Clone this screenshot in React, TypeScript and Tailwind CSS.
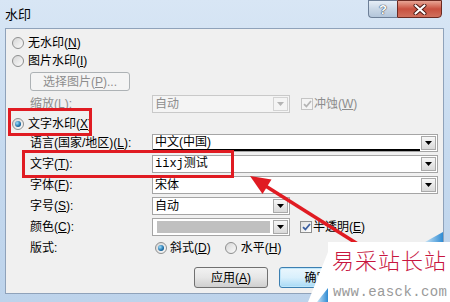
import type { ReactNode } from "react"
import clsx from "clsx"

function Key({ k }: { k: string }) {
  return (
    <>
      (<span className="underline underline-offset-1">{k}</span>)
    </>
  )
}

function Radio({ checked }: { checked?: boolean }) {
  return (
    <span className="flex h-[12px] w-[12px] shrink-0 items-center justify-center rounded-full border border-[#8e8f8f] bg-gradient-to-br from-[#d6d6d6] to-[#fbfbfb]">
      {checked && (
        <span className="h-[6px] w-[6px] rounded-full bg-[radial-gradient(circle_at_35%_35%,#9fe0ff,#1d6fa8_60%,#0d3f6a)]" />
      )}
    </span>
  )
}

function Check({ checked, disabled }: { checked?: boolean; disabled?: boolean }) {
  return (
    <span
      className={clsx(
        "flex h-[12px] w-[12px] shrink-0 items-center justify-center border",
        disabled ? "border-[#c4c4c4] bg-[#f4f4f4]" : "border-[#8e8f8f] bg-gradient-to-br from-[#e0e0e0] to-white"
      )}
    >
      {checked && (
        <svg width="9" height="8" viewBox="0 0 9 8">
          <path
            d="M1 4.2 3.4 6.5 8 1"
            fill="none"
            stroke={disabled ? "#b5b5b5" : "#3c5fa0"}
            strokeWidth="1.8"
          />
        </svg>
      )}
    </span>
  )
}

function Arrow({ disabled }: { disabled?: boolean }) {
  return (
    <span
      className={clsx(
        "m-px flex w-[15px] items-center justify-center border",
        disabled ? "border-[#d3d3d3] bg-[#f4f4f4]" : "border-[#a9a9a9] bg-gradient-to-b from-[#f7f7f7] to-[#d9d9d9]"
      )}
    >
      <svg width="7" height="4" viewBox="0 0 7 4">
        <path d="M0 0h7L3.5 4z" fill={disabled ? "#b4b4b4" : "#000"} />
      </svg>
    </span>
  )
}

function Combo({
  wide,
  disabled,
  underline,
  children,
}: {
  wide?: boolean
  disabled?: boolean
  underline?: boolean
  children?: ReactNode
}) {
  return (
    <div
      className={clsx(
        "flex h-[18px] border",
        wide ? "w-[286px]" : "w-[138px]",
        disabled ? "border-[#c9c9c9] bg-[#f4f4f4] text-[#8d8d8d]" : "border-[#a5a5a5] bg-white"
      )}
    >
      <div className={clsx("flex flex-1 items-center px-[2px]", underline && "border-b-2 border-black")}>
        {children}
      </div>
      <Arrow disabled={disabled} />
    </div>
  )
}

function Field({ label, children }: { label: ReactNode; children: ReactNode }) {
  return (
    <div className="flex h-[18px] items-center pl-[18px]">
      <div className="w-[122px] leading-none">{label}</div>
      {children}
    </div>
  )
}

export default function App() {
  return (
    <div className="relative h-[302px] w-[450px] overflow-hidden bg-gradient-to-b from-[#d8e6f5] via-[#c6daef] to-[#bdd3eb] font-['Liberation_Sans','Noto_Sans_CJK_SC',sans-serif] text-[12px] text-black">
      {/* title bar */}
      <div className="flex h-[28px] items-start">
        <div className="ml-[5px] self-center text-[13px] leading-none">水印</div>
        <div className="ml-auto mr-[8px] flex h-[18px]">
          <div className="flex w-[29px] items-center justify-center rounded-bl-[4px] border border-r-0 border-[#6d7f97] bg-gradient-to-b from-[#e6eef7] via-[#c9d7e6] to-[#b3c5da]">
            <span className="text-[13px] font-bold leading-none text-white [text-shadow:0_0_1px_#1d2b40,0_0_1px_#1d2b40]">?</span>
          </div>
          <div className="flex w-[45px] items-center justify-center rounded-br-[4px] border border-[#6b2a22] bg-gradient-to-b from-[#e8a595] via-[#c8503f] to-[#d0705d]">
            <svg width="14" height="11" viewBox="0 0 14 11">
              <path d="M2.5 1.5 11.5 9.5M11.5 1.5 2.5 9.5" stroke="#4a1610" strokeWidth="4" strokeLinecap="round" />
              <path d="M2.5 1.5 11.5 9.5M11.5 1.5 2.5 9.5" stroke="#fff" strokeWidth="2.2" strokeLinecap="round" />
            </svg>
          </div>
        </div>
      </div>

      {/* client area */}
      <div className="ml-[5px] flex h-[266px] w-[439px] flex-col border border-[#8fa2ba] bg-[#f0f0f0] pl-[6px] pt-[5px]">
        <div className="flex h-[18px] items-center gap-[4px] leading-none">
          <Radio />
          <span>
            无水印<Key k="N" />
          </span>
        </div>
        <div className="flex h-[18px] items-center gap-[4px] leading-none">
          <Radio />
          <span>
            图片水印<Key k="I" />
          </span>
        </div>
        <div className="ml-[18px] mt-[2px] flex h-[19px] w-[100px] items-center justify-center rounded-[3px] border border-[#adb2b5] bg-[#f4f4f4] leading-none text-[#8d8d8d]">
          选择图片<Key k="P" />...
        </div>
        <div className="mt-[4px]">
          <Field
            label={
              <span className="text-[#8d8d8d]">
                缩放<Key k="L" />:
              </span>
            }
          >
            <Combo disabled>自动</Combo>
            <div className="ml-[11px] flex items-center gap-[1px] leading-none text-[#8d8d8d]">
              <Check checked disabled />
              <span>
                冲蚀<Key k="W" />
              </span>
            </div>
          </Field>
        </div>
        <div className="mt-[2px] flex h-[18px] items-center gap-[4px] leading-none">
          <Radio checked />
          <span>
            文字水印<Key k="X" />
          </span>
        </div>
        <div className="mt-[1px]">
          <Field
            label={
              <>
                语言(国家/地区)<Key k="L" />:
              </>
            }
          >
            <Combo wide underline>
              中文(中国)
            </Combo>
          </Field>
        </div>
        <div className="mt-[3px]">
          <Field
            label={
              <>
                文字<Key k="T" />:
              </>
            }
          >
            <Combo wide>
              <span className="font-['Liberation_Mono','Noto_Sans_CJK_SC',monospace]">iixj测试</span>
            </Combo>
          </Field>
        </div>
        <div className="mt-[3px]">
          <Field
            label={
              <>
                字体<Key k="F" />:
              </>
            }
          >
            <Combo wide>宋体</Combo>
          </Field>
        </div>
        <div className="mt-[3px]">
          <Field
            label={
              <>
                字号<Key k="S" />:
              </>
            }
          >
            <Combo>自动</Combo>
          </Field>
        </div>
        <div className="mt-[3px]">
          <Field
            label={
              <>
                颜色<Key k="C" />:
              </>
            }
          >
            <Combo>
              <span className="ml-[2px] h-[12px] w-[113px] bg-[#c0c0c0]" />
            </Combo>
            <div className="ml-[10px] flex items-center gap-[1px] leading-none">
              <Check checked />
              <span>
                半透明<Key k="E" />
              </span>
            </div>
          </Field>
        </div>
        <div className="mt-[3px]">
          <Field label="版式:">
            <div className="ml-[3px] flex items-center gap-[3px] leading-none">
              <Radio checked />
              <span>
                斜式<Key k="D" />
              </span>
            </div>
            <div className="ml-[14px] flex items-center gap-[4px] leading-none">
              <Radio />
              <span>
                水平<Key k="H" />
              </span>
            </div>
          </Field>
        </div>
        <div className="ml-[182px] mt-[10px] flex h-[21px] gap-[11px] leading-none">
          <div className="flex w-[74px] items-center justify-center rounded-[3px] border border-[#707070] bg-gradient-to-b from-[#f2f2f2] via-[#e6e6e6] to-[#cfcfcf]">
            应用<Key k="A" />
          </div>
          <div className="flex w-[75px] items-center justify-center rounded-[3px] border border-[#3c7fb1] bg-gradient-to-b from-[#eaf6fd] via-[#d9f0fc] to-[#a7d9f5] shadow-[inset_0_0_0_1px_#bfe6fa]">
            确定
          </div>
        </div>
      </div>

      {/* red annotation boxes */}
      <div className="absolute left-[8px] top-[108px] h-[28px] w-[84px] border-[3px] border-[#e01b22]" />
      <div className="absolute left-[22px] top-[150px] h-[28px] w-[212px] border-[3px] border-[#e01b22]" />

      {/* arrow */}
      <svg className="absolute left-0 top-0" width="450" height="302" viewBox="0 0 450 302">
        <line x1="264" y1="185" x2="372" y2="253" stroke="#e01b22" strokeWidth="3.5" />
        <polygon points="250,176 271.5,179.5 262.5,194" fill="#e01b22" />
      </svg>

      {/* site watermark */}
      <svg className="absolute left-[305px] top-[228px]" width="145" height="74" viewBox="0 0 145 74">
        <defs>
          <linearGradient id="wb" x1="0" y1="0" x2="1" y2="0">
            <stop offset="0" stopColor="#c6e3f6" />
            <stop offset="1" stopColor="#2f8bd3" />
          </linearGradient>
        </defs>
        <polygon points="120,14 138,4 138,14" fill="url(#wb)" />
        <polygon points="23,14 145,14 145,74 3,74 23,24" fill="#fff" />
        <polygon points="12,74 23,60 23,74" fill="url(#wb)" />
      </svg>
      <div className="absolute left-[332px] top-[248px] font-['Noto_Sans_CJK_SC',serif] text-[22px] font-light leading-none tracking-[1px] text-[#c8163f]">
        易采站长站
      </div>
      <div className="absolute left-[333px] top-[285px] font-['Liberation_Mono',monospace] text-[14px] leading-none tracking-[0.4px] text-[#9a9a9a]">
        www.easck.com
      </div>
    </div>
  )
}
